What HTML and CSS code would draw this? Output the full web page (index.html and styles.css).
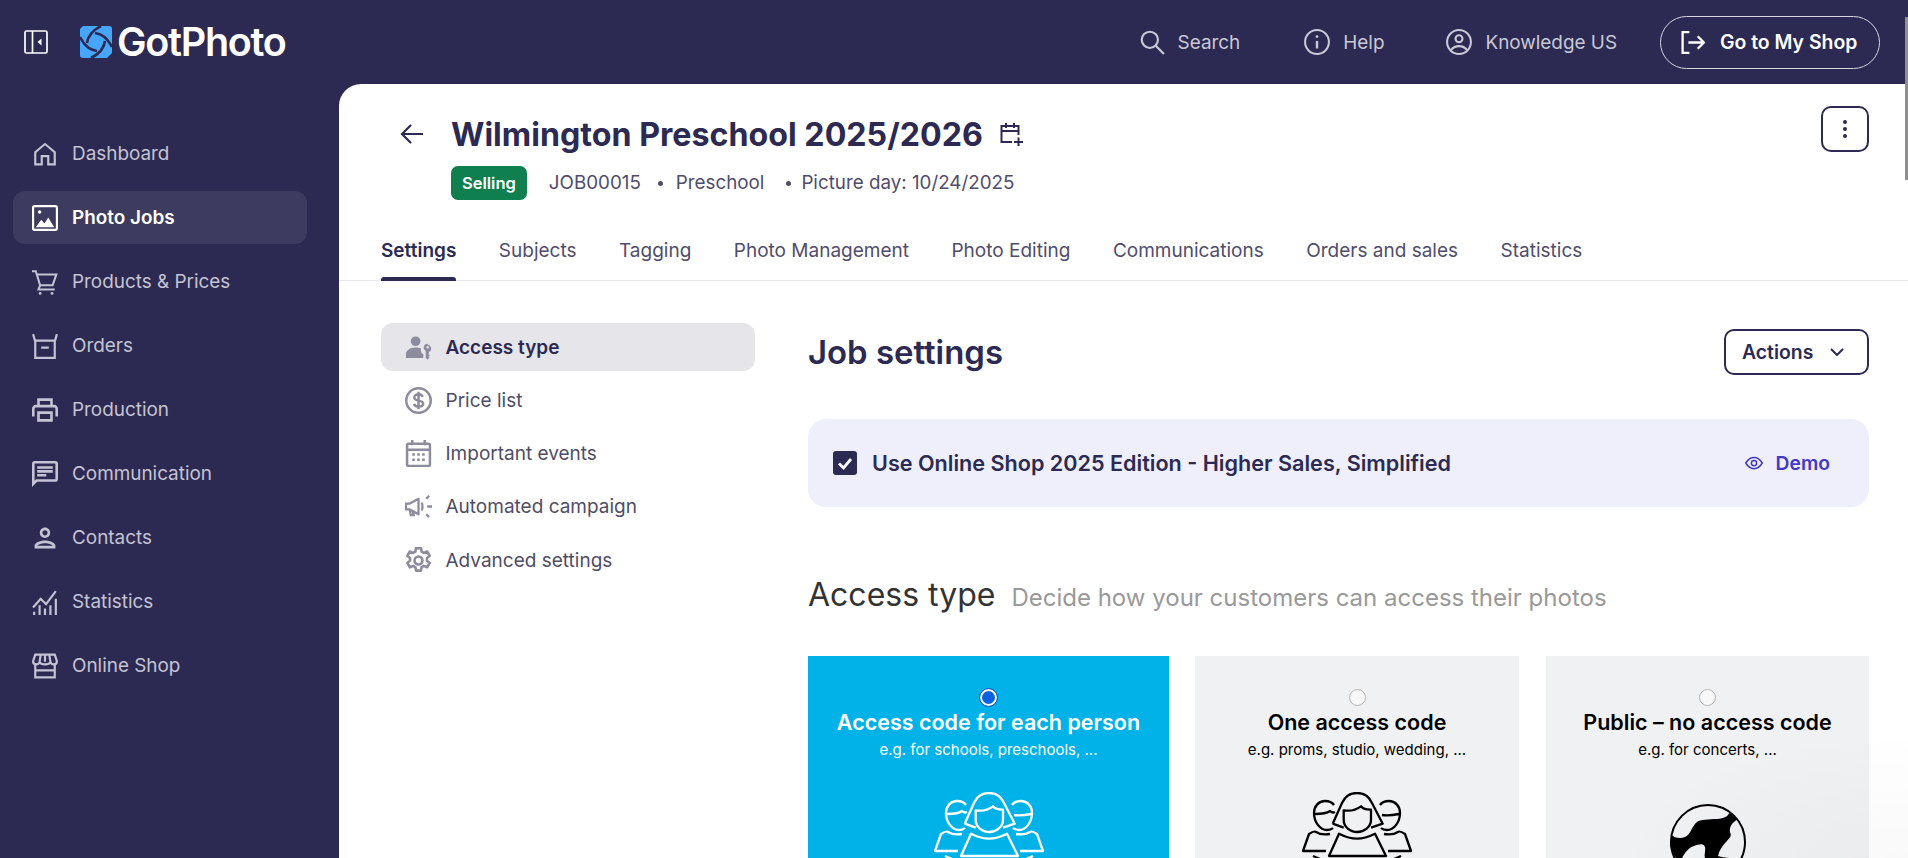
FILE: index.html
```html
<!DOCTYPE html>
<html lang="en">
<head>
    <meta charset="UTF-8">
    <title>Wilmington Preschool 2025/2026</title>
    <link rel="stylesheet" href="styles.css">
</head>
<body>

<div class="app">
    <header class="topbar">
        <div class="brand">
            <svg class="toggle" viewBox="0 0 24 24" fill="none" stroke="currentColor" stroke-width="1.7"><rect x="1" y="1" width="22" height="22" rx="1.5"/><path d="M8.5 1v22"/><path d="M17.5 8.5L13.5 12l4 3.5z" fill="currentColor" stroke="none"/></svg>
            <svg class="logo-mark" viewBox="0 0 32 32"><path d="M0 3l3-3h26a3 3 0 0 1 3 3v24l-5 5H3a3 3 0 0 1-3-3z" fill="#45a6fb"/><g fill="none" stroke="#2c2a52" stroke-width="2.6"><path d="M21 0C13 4 8 9 7 17"/><path d="M32 21C28 13 23 8 15 7"/><path d="M11 32c8-4 13-9 14-17"/><path d="M0 11c4 8 9 13 17 14"/></g></svg>
            <span class="logo-text">GotPhoto</span>
        </div>
        <nav class="top-links">
            <a class="top-link link-search">
                <svg viewBox="0 0 24 24" fill="none" stroke="currentColor" stroke-width="2"><circle cx="10" cy="10" r="7.5"/><path d="M15.5 15.5L23 23"/></svg>
                Search
            </a>
            <a class="top-link link-help">
                <svg viewBox="0 0 24 24" fill="none" stroke="currentColor" stroke-width="1.9"><circle cx="12" cy="12" r="11"/><path d="M12 11v7" stroke-width="2.2"/><circle cx="12" cy="7" r="1.3" fill="currentColor" stroke="none"/></svg>
                Help
            </a>
            <a class="top-link link-know">
                <svg viewBox="0 0 24 24" fill="none" stroke="currentColor" stroke-width="1.9"><circle cx="12" cy="12" r="11"/><circle cx="12" cy="9" r="3.2"/><path d="M4.5 19.5c2-2.6 4.5-3.7 7.5-3.7s5.500 1.100 7.500 3.700"/></svg>
                Knowledge US
            </a>
            <a class="shop-btn">
                <svg viewBox="0 0 24 24" fill="none" stroke="currentColor" stroke-width="2.2"><path d="M9 2H2.500v20H9"/><path d="M8 12h15M17 6l6 6-6 6"/></svg>
                Go to My Shop
            </a>
        </nav>
    </header>

    <aside class="sidebar">
        <a class="nav-item">
            <svg viewBox="0 0 24 24" fill="currentColor"><path d="M12 1.500L2 10v12.500h8V15h4v7.500h8V10zm8 19h-4V13H8v7.500H4v-9.600l8-7 8 7z"/></svg>
            Dashboard
        </a>
        <a class="nav-item active">
            <svg viewBox="0 0 24 24" fill="none" stroke="currentColor" stroke-width="2"><rect x="1" y="1" width="22" height="22" rx="1.500"/><circle cx="7" cy="6.500" r="1.600" fill="currentColor" stroke="none"/><path d="M3.500 20.500l5-7 3 3.500 3.500-5.500 5.500 9z" fill="currentColor" stroke="none"/></svg>
            Photo Jobs
        </a>
        <a class="nav-item">
            <svg viewBox="0 0 24 24" fill="none" stroke="currentColor" stroke-width="1.900"><path d="M0 2h3.500l4 13h11.500l3.500-10H5"/><path d="M7.500 15l-1.500 4h15"/><circle cx="7.500" cy="22.500" r="1.300" fill="currentColor" stroke="none"/><circle cx="18.500" cy="22.500" r="1.300" fill="currentColor" stroke="none"/></svg>
            Products &amp; Prices
        </a>
        <a class="nav-item">
            <svg viewBox="0 0 24 24" fill="none" stroke="currentColor" stroke-width="2"><path d="M1 1l2 7v15h18V8l2-7"/><path d="M3 7h18M8.500 13.500h7"/></svg>
            Orders
        </a>
        <a class="nav-item">
            <svg viewBox="0 0 24 24" fill="currentColor"><path d="M19 8h-1V3H6v5H5c-1.660 0-3 1.340-3 3v6h4v4h12v-4h4v-6c0-1.660-1.340-3-3-3zM8 5h8v3H8V5zm8 14H8v-4h8v4zm2-2v-4H6v4H4v-6c0-.55.45-1 1-1h14c.55 0 1 .45 1 1v6h-2z" transform="translate(-2.400 -2.400) scale(1.200)"/></svg>
            Production
        </a>
        <a class="nav-item">
            <svg viewBox="0 0 24 24" fill="currentColor"><path d="M20 2H4c-1.100 0-2 .9-2 2v18l4-4h14c1.100 0 2-.9 2-2V4c0-1.100-.9-2-2-2zm0 14H5.170L4 17.170V4h16v12zM6 12h7v2H6zM6 9h12v2H6zM6 6h12v2H6z" transform="translate(-2.400 -2.400) scale(1.200)"/></svg>
            Communication
        </a>
        <a class="nav-item">
            <svg viewBox="0 0 24 24" fill="currentColor"><path d="M12 6c1.100 0 2 .9 2 2s-.9 2-2 2-2-.9-2-2 .9-2 2-2m0 10c2.700 0 5.800 1.290 6 2H6c.23-.72 3.310-2 6-2m0-12C9.790 4 8 5.790 8 8s1.790 4 4 4 4-1.790 4-4-1.790-4-4-4zm0 10c-2.670 0-8 1.340-8 4v2h16v-2c0-2.660-5.330-4-8-4z" transform="translate(-2.400 -2.400) scale(1.200)"/></svg>
            Contacts
        </a>
        <a class="nav-item">
            <svg viewBox="0 0 24 24" fill="none" stroke="currentColor" stroke-width="2"><path d="M1 17L8 9l5 5 9-12"/><path d="M2 24v-3M7 24v-9M12 24v-6M17 24v-9M22 24V9"/></svg>
            Statistics
        </a>
        <a class="nav-item">
            <svg viewBox="0 0 24 24" fill="none" stroke="currentColor" stroke-width="2"><path d="M3 1.500h18l2 6c0 2-1.500 3-3 3s-2.500-1-3-2c-.5 1-2 2-5 2s-4.500-1-5-2c-.5 1-1.500 2-3 2s-3-1-3-3z"/><path d="M8 2l-1 6M12 2v6M16 2l1 6"/><path d="M3 11v11.500h18V11M3 16h18"/></svg>
            Online Shop
        </a>
    </aside>

    <main class="panel">
        <div class="job-head">
            <svg class="back" viewBox="0 0 24 24" fill="none" stroke="currentColor" stroke-width="2.200"><path d="M23 12H2M11 3l-9 9 9 9"/></svg>
            <div class="job-info">
                <div class="job-title">
                    <h1>Wilmington Preschool 2025/2026</h1>
                    <svg viewBox="0 0 24 24" fill="none" stroke="currentColor" stroke-width="2"><path d="M13 20H2.500V4h17v9"/><path d="M2.500 9h17M7 1v5M15 1v5"/><path d="M15 20h9M19.500 15.500v8.500"/></svg>
                </div>
                <div class="job-meta">
                    <span class="badge">Selling</span>
                    <span>JOB00015</span>
                    <i class="dot"></i>
                    <span>Preschool</span>
                    <i class="dot"></i>
                    <span>Picture day: 10/24/2025</span>
                </div>
            </div>
            <button class="kebab"><i></i><i></i><i></i></button>
        </div>

        <nav class="tabs">
            <a class="tab active">Settings</a>
            <a class="tab">Subjects</a>
            <a class="tab">Tagging</a>
            <a class="tab">Photo Management</a>
            <a class="tab">Photo Editing</a>
            <a class="tab">Communications</a>
            <a class="tab">Orders and sales</a>
            <a class="tab">Statistics</a>
        </nav>

        <div class="settings">
            <div class="side-menu">
                <a class="side-item active">
                    <svg viewBox="0 0 28 24" fill="currentColor"><circle cx="11" cy="5.500" r="5"/><path d="M1 23v-4c0-4 4-7 10-7 2 0 4 .3 5.500 1-.5 3 .5 5 2.500 6v4z"/><path d="M23.500 8a4 4 0 0 0-2 7.500V23l2 1.500 2-2-1-1 1-1.500-1-1 .5-2.500a4 4 0 0 0-1.500-7.500zm0 2.500a1.300 1.300 0 1 1 0 2.600 1.300 1.300 0 0 1 0-2.600z"/></svg>
                    Access type
                </a>
                <a class="side-item">
                    <svg viewBox="0 0 26 26" fill="none" stroke="currentColor" stroke-width="2.400"><circle cx="13" cy="13" r="11.800"/><path d="M17 9.500c-.5-1.500-2-2.500-4-2.500-2.500 0-4 1.300-4 3 0 4.500 8.500 1.800 8.500 6 0 1.800-1.800 3-4.300 3-2.300 0-4-1-4.500-2.800M13 4.500v17"/></svg>
                    Price list
                </a>
                <a class="side-item">
                    <svg viewBox="0 0 24 26" fill="none" stroke="currentColor" stroke-width="2.400"><rect x="1" y="3.500" width="22" height="21.500" rx="1.500"/><path d="M1 9.500h22M6 0v5M18 0v5"/><path d="M6 14h2.500M10.800 14h2.500M15.500 14h2.500M6 19h2.500M10.800 19h2.500M15.500 19h2.500"/></svg>
                    Important events
                </a>
                <a class="side-item">
                    <svg viewBox="0 0 28 24" fill="none" stroke="currentColor" stroke-width="2.400"><path d="M1 9v6h4l9 5V4L5 9z" stroke-linejoin="round"/><path d="M5 15l1 6h3l-1-5M17 8c1.500 1 1.500 7 0 8M22 4l3-3M23 12h5M22 20l3 3"/></svg>
                    Automated campaign
                </a>
                <a class="side-item">
                    <svg viewBox="0 0 24 24" fill="none" stroke="currentColor" stroke-width="2.300"><circle cx="12" cy="12" r="3.500"/><path d="M9.800 1h4.400l.6 3.200 1.900 1 3-1.200 2.200 3.800-2.400 2.100v2.200l2.400 2.100-2.200 3.800-3-1.200-1.900 1-.6 3.200H9.800l-.6-3.200-1.900-1-3 1.200-2.200-3.800 2.400-2.100v-2.200L2.100 7.800 4.300 4l3 1.200 1.900-1z" stroke-linejoin="round"/></svg>
                    Advanced settings
                </a>
            </div>

            <section class="content">
                <div class="content-head">
                    <h2>Job settings</h2>
                    <button class="actions-btn">
                        Actions
                        <svg viewBox="0 0 14 8" fill="none" stroke="currentColor" stroke-width="2"><path d="M1 1l6 6 6-6"/></svg>
                    </button>
                </div>

                <div class="banner">
                    <span class="checkbox">
                        <svg viewBox="0 0 24 24" fill="none" stroke="#fff" stroke-width="2.800"><path d="M6 12.500l4.500 4.500L18 8"/></svg>
                    </span>
                    <span class="banner-text">Use Online Shop 2025 Edition - Higher Sales, Simplified</span>
                    <a class="demo">
                        <svg viewBox="0 0 24 24" fill="none" stroke="currentColor" stroke-width="2"><path d="M1 12c3-5 7-7.500 11-7.500S20 7 23 12c-3 5-7 7.500-11 7.500S4 17 1 12z"/><circle cx="12" cy="12" r="3.500"/></svg>
                        Demo
                    </a>
                </div>

                <div class="section-title">
                    <h3>Access type</h3>
                    <span>Decide how your customers can access their photos</span>
                </div>

                <div class="cards">
                    <div class="card selected card-a">
                        <span class="radio"></span>
                        <h4>Access code for each person</h4>
                        <p>e.g. for schools, preschools, ...</p>
                        <svg class="people" viewBox="0 0 112 70" fill="none" stroke="currentColor" stroke-width="2.300" stroke-linejoin="round"><path d="M31.700 31.700L41 11C44 4 50 1 56 1s12 3 15 10l10.700 20.700L70 35.700M31.700 31.700l11 4"/><path d="M42.700 18.300c6 1 12 0 17.300-4 2 2.500 6 3.500 10 3.400v10C70 35 63 40 56.300 40 49 40 42.700 35 42.700 28z"/><path d="M28 64l10-22.300c6 3 12 5 18 5s12-2 18-5L85 64zM26 69h60"/><path d="M33 13c-2-3-6-4-9-4-6 0-11 5-11 12 0 9 6 17 13 17 3 0 5-1 6-2M14 22c6 0 11 0 15-3 1 1 3 2 5 1"/><path d="M79 13c2-3 6-4 9-4 6 0 11 5 11 12 0 9-6 17-13 17-3 0-5-1-6-2M98 22c-5 1-11 2-17 1"/><path d="M25 59H2l6-17c3-2 6-3 7-2 3 2 8 3 14 2"/><path d="M87 59h23l-6-17c-3-2-6-3-7-2-3 2-8 3-14 2"/><path d="M12 64l7 3M100 64l-7 3"/></svg>
                    </div>
                    <div class="card card-b">
                        <span class="radio"></span>
                        <h4>One access code</h4>
                        <p>e.g. proms, studio, wedding, ...</p>
                        <svg class="people" viewBox="0 0 112 70" fill="none" stroke="currentColor" stroke-width="2.300" stroke-linejoin="round"><path d="M31.700 31.700L41 11C44 4 50 1 56 1s12 3 15 10l10.700 20.700L70 35.700M31.700 31.700l11 4"/><path d="M42.700 18.300c6 1 12 0 17.300-4 2 2.500 6 3.500 10 3.400v10C70 35 63 40 56.300 40 49 40 42.700 35 42.700 28z"/><path d="M28 64l10-22.300c6 3 12 5 18 5s12-2 18-5L85 64zM26 69h60"/><path d="M33 13c-2-3-6-4-9-4-6 0-11 5-11 12 0 9 6 17 13 17 3 0 5-1 6-2M14 22c6 0 11 0 15-3 1 1 3 2 5 1"/><path d="M79 13c2-3 6-4 9-4 6 0 11 5 11 12 0 9-6 17-13 17-3 0-5-1-6-2M98 22c-5 1-11 2-17 1"/><path d="M25 59H2l6-17c3-2 6-3 7-2 3 2 8 3 14 2"/><path d="M87 59h23l-6-17c-3-2-6-3-7-2-3 2-8 3-14 2"/><path d="M12 64l7 3M100 64l-7 3"/></svg>
                    </div>
                    <div class="card card-c">
                        <span class="radio"></span>
                        <h4>Public – no access code</h4>
                        <p>e.g. for concerts, ...</p>
                        <svg class="globe" viewBox="0 0 76 76"><circle cx="38" cy="38" r="37" fill="none" stroke="currentColor" stroke-width="2"/><path d="M59 9C58 13 52 15 44 15 36 16 28 15 25 20 21 25 20 31 15 33 10 35 5 34 1.500 31L0 40C1 48 5 54 10 58 13 52 17 44 24 42 29 40 34 39 35 43 36 47 33 52 36 56L76 60 70 55C62 54 54 54 48 52 49 47 52 42 56 38 60 34 62 32 60 28 59 22 63 18 68 15z" fill="currentColor"/></svg>
                    </div>
                </div>
            </section>
        </div>
    </main>
</div>

<div class="glow"></div>
<div class="scroll-thumb"></div>

</body>
</html>
```

FILE: styles.css
```css
* {
    box-sizing: border-box;
}
html, body {
    height: 100%;
}
body {
    margin: 0;
    background: #2c2a52;
    font-family: Inter, "Liberation Sans", sans-serif;
    color: #2c2a52;
    overflow: hidden;
}
h1, h2, h3, h4, p {
    margin: 0;
}
svg {
    display: block;
    flex-shrink: 0;
}
.app {
    display: grid;
    grid-template-columns: 339px 1fr;
    grid-template-rows: 84px 774px;
    height: 858px;
}

/* top bar */
.topbar {
    grid-column: 1 / 3;
    display: flex;
    align-items: center;
    justify-content: space-between;
    padding: 0 28px 0 24px;
}
.brand {
    display: flex;
    align-items: center;
    color: #fff;
}
.toggle {
    width: 24px;
    height: 24px;
    margin-right: 32px;
}
.logo-mark {
    width: 32px;
    height: 32px;
    margin-right: 5px;
}
.logo-text {
    font-size: 39.5px;
    font-weight: 600;
    letter-spacing: -1.3px;
    line-height: 40px;
}
.top-links {
    display: flex;
    align-items: center;
}
.top-link {
    display: flex;
    align-items: center;
    gap: 13px;
    font-size: 18.9px;
    color: #c9c8d6;
}
.top-link svg {
    width: 26px;
    height: 26px;
}
.link-search {
    margin-right: 64px;
}
.link-help {
    margin-right: 62px;
}
.link-know {
    margin-right: 43px;
}
.shop-btn {
    display: flex;
    align-items: center;
    gap: 15px;
    width: 220px;
    height: 53px;
    padding-left: 19px;
    border: 1px solid #d5d4e0;
    border-radius: 27px;
    font-size: 19.4px;
    font-weight: 600;
    color: #fff;
}
.shop-btn svg {
    width: 25px;
    height: 25px;
}

/* left nav */
.sidebar {
    display: flex;
    flex-direction: column;
    gap: 11px;
    padding: 43px 32px 0 13px;
}
.nav-item {
    display: flex;
    align-items: center;
    gap: 14px;
    height: 53px;
    padding-left: 19px;
    border-radius: 12px;
    font-size: 18.9px;
    color: #c4c3d3;
}
.nav-item svg {
    width: 26px;
    height: 26px;
}
.nav-item.active {
    background: #3d3b5f;
    color: #fff;
    font-weight: 600;
}

/* white panel */
.panel {
    position: relative;
    background: #fff;
    border-top-left-radius: 22px;
    overflow: hidden;
}
.job-head {
    display: flex;
    height: 116px;
    padding: 22px 39px 0 61px;
}
.back {
    width: 24px;
    height: 24px;
    margin: 16px 27px 0 0;
}
.job-info {
    flex: 1;
}
.job-title {
    display: flex;
    align-items: center;
    gap: 16px;
    height: 56px;
}
.job-title h1 {
    font-size: 32.2px;
    font-weight: 700;
}
.job-title svg {
    width: 24px;
    height: 24px;
}
.job-meta {
    display: flex;
    align-items: center;
    gap: 22px;
    margin-top: 4px;
    font-size: 18.8px;
    line-height: 32px;
    color: #4f4d6b;
}
.dot {
    width: 5px;
    height: 5px;
    margin: 0 -9px 0 -5px;
    border-radius: 50%;
    background: #4f4d6b;
}
.dot + span + .dot {
    margin: 0 -12px 0 0;
}
.badge {
    height: 34px;
    padding: 0 11px;
    border-radius: 7px;
    background: #0f7f4f;
    color: #fff;
    font-size: 16.5px;
    font-weight: 600;
    line-height: 34px;
}
.kebab {
    display: flex;
    flex-direction: column;
    align-items: center;
    justify-content: center;
    gap: 3px;
    width: 48px;
    height: 46px;
    border: 2px solid #2c2a52;
    border-radius: 10px;
    background: #fff;
}
.kebab i {
    width: 4px;
    height: 4px;
    border-radius: 50%;
    background: #2c2a52;
}
.tabs {
    display: flex;
    gap: 42.5px;
    height: 81px;
    padding: 32px 0 0 42px;
    border-bottom: 1px solid #e8e8ec;
}
.tab {
    position: relative;
    height: 49px;
    padding-top: 7px;
    font-size: 19px;
    color: #4f4d6b;
}
.tab.active {
    color: #2c2a52;
    font-weight: 600;
}
.tab.active::after {
    content: "";
    position: absolute;
    left: 0;
    right: 0;
    bottom: 0;
    height: 4px;
    border-radius: 3px 3px 0 0;
    background: #2c2a52;
}

/* settings area */
.settings {
    display: flex;
    gap: 53px;
    padding: 42px 39px 0 42px;
}
.side-menu {
    display: flex;
    flex-direction: column;
    gap: 5.3px;
    width: 374px;
}
.side-item {
    display: flex;
    align-items: center;
    gap: 13.5px;
    height: 48px;
    padding-left: 24px;
    border-radius: 12px;
    font-size: 19px;
    color: #4f4d63;
}
.side-item svg {
    width: 27px;
    height: 27px;
    color: #8d8c9e;
}
.side-item.active {
    background: #e5e5ea;
    color: #2c2a52;
    font-weight: 600;
}
.content {
    flex: 1;
}
.content-head {
    display: flex;
    align-items: center;
    justify-content: space-between;
    margin-top: 6px;
}
.content-head h2 {
    font-size: 32.9px;
    font-weight: 600;
}
.actions-btn {
    display: flex;
    align-items: center;
    gap: 17px;
    width: 145px;
    height: 46px;
    padding-left: 16px;
    border: 2px solid #2c2a52;
    border-radius: 10px;
    background: #fff;
    color: #2c2a52;
    font-family: inherit;
    font-size: 19.4px;
    font-weight: 600;
}
.actions-btn svg {
    width: 14px;
    height: 8px;
}
.banner {
    display: flex;
    align-items: center;
    height: 88px;
    margin-top: 44px;
    padding: 0 39px 0 25px;
    border-radius: 18px;
    background: #eeeffa;
}
.checkbox {
    width: 24px;
    height: 24px;
    margin-right: 15px;
    border-radius: 3px;
    background: #2c2a52;
}
.banner-text {
    flex: 1;
    font-size: 21.6px;
    font-weight: 600;
}
.demo {
    display: flex;
    align-items: center;
    gap: 13px;
    font-size: 19.3px;
    font-weight: 600;
    color: #4338c8;
}
.demo svg {
    width: 18px;
    height: 18px;
}
.section-title {
    display: flex;
    align-items: baseline;
    gap: 16px;
    margin-top: 68px;
}
.section-title h3 {
    font-size: 32px;
    font-weight: 400;
    color: #333;
}
.section-title span {
    font-size: 24px;
    color: #999;
}
.cards {
    display: flex;
    gap: 26px;
    margin-top: 42px;
}
.card {
    display: flex;
    flex-direction: column;
    align-items: center;
    height: 300px;
    padding-top: 33px;
    background: #f0f1f3;
    color: #000;
    text-align: center;
}
.card-a {
    width: 361px;
}
.card-b {
    width: 324px;
}
.card-c {
    width: 323px;
    margin-left: 1px;
}
.card.selected {
    background: #00b2e8;
    color: #fff;
}
.radio {
    width: 17px;
    height: 17px;
    border: 1px solid #b5b5b5;
    border-radius: 50%;
    background: #f8f8f9;
}
.selected .radio {
    border: 2px solid #fff;
    outline: 1px solid #1b4fd0;
    background: #0b62e0;
}
.card h4 {
    margin-top: 1px;
    font-size: 21.5px;
    font-weight: 600;
    line-height: 30px;
}
.card p {
    margin-top: 2px;
    font-size: 15px;
    line-height: 22px;
}
.people {
    width: 112px;
    height: 70px;
    margin-top: 31px;
}
.globe {
    width: 76px;
    height: 76px;
    margin-top: 43px;
}

/* shadow of the chat widget and the page scrollbar */
.glow {
    position: absolute;
    right: 0;
    bottom: 0;
    width: 300px;
    height: 130px;
    background: radial-gradient(ellipse at 100% 100%, rgba(0, 0, 0, .025), rgba(0, 0, 0, 0) 70%);
}
.scroll-thumb {
    position: absolute;
    top: 17px;
    right: 0;
    width: 3px;
    height: 163px;
    background: #8f8f8f;
}
```
